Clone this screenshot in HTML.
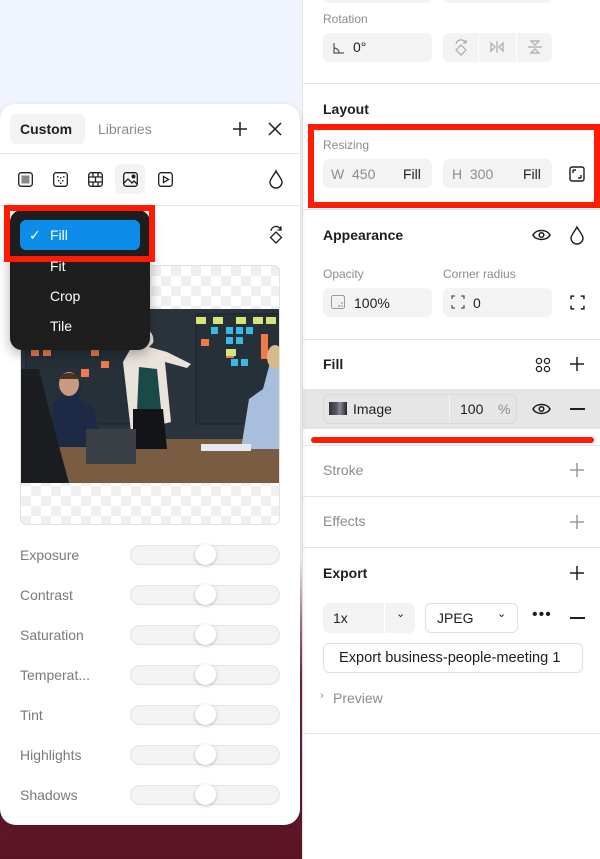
<!DOCTYPE html>
<html><head><meta charset="utf-8"><style>
*{box-sizing:border-box;margin:0;padding:0}
body{width:600px;height:859px;overflow:hidden;position:relative;font-family:"Liberation Sans",sans-serif;background:linear-gradient(180deg,#f0f4fe 0,#f0f4fe 560px,#a87a86 620px,#6e2436 680px,#5a1424 859px)}
.a{position:absolute}
.t{position:absolute;font-size:14px;color:#1e1e1e;white-space:nowrap}
.g{color:#8c8c8c}
.lbl{position:absolute;font-size:12px;color:#8c8c8c}
.h{position:absolute;font-size:14px;font-weight:bold;color:#1e1e1e}
.in{position:absolute;background:#f3f3f3;border-radius:6px}
.div{position:absolute;left:302px;width:298px;height:1px;background:#e6e6e6}
#left{left:0;top:104px;width:300px;height:721px;background:#fff;border-radius:16px;box-shadow:0 2px 8px rgba(0,0,0,.12)}
#right{left:302px;top:0;width:298px;height:859px;background:#fff;border-left:1px solid #e3e3e3}
.trk{position:absolute;left:130px;width:150px;height:20px;border-radius:10px;background:#f3f3f3;border:1px solid #e3e3e3}
.knob{position:absolute;left:195px;width:21px;height:21px;border-radius:50%;background:#fff;box-shadow:0 1px 3px rgba(0,0,0,.25)}
.sl{position:absolute;left:20px;font-size:14px;color:#7a7a7a}
svg{position:absolute;overflow:visible}
</style></head><body>
<div id="right" class="a"></div>
<div class="in" style="left:323px;top:-20px;width:109px;height:23px;background:#f3f3f3"></div>
<div class="in" style="left:443px;top:-20px;width:109px;height:23px"></div>
<div class="lbl" style="left:323px;top:12px">Rotation</div>
<div class="in" style="left:323px;top:33px;width:109px;height:29px"></div>
<svg style="left:332px;top:41px" width="14" height="14" viewBox="0 0 14 14" fill="none" stroke="#555" stroke-width="1.2"><path d="M2 2v10h10M2 7a5 5 0 0 1 5 5"/></svg>
<div class="t" style="left:353px;top:39px">0°</div>
<div class="in" style="left:443px;top:33px;width:109px;height:29px"></div>
<div class="a" style="left:478px;top:33px;width:1px;height:29px;background:#fff"></div>
<div class="a" style="left:516px;top:33px;width:1px;height:29px;background:#fff"></div>
<svg style="left:453px;top:38px" width="16" height="18" viewBox="0 0 16 18" fill="none" stroke="#aaa" stroke-width="1.2"><path d="M8 7l5 5-5 5-5-5z M3 6a5 5 0 0 1 9-2l1-2v3h-3"/></svg>
<svg style="left:489px;top:40px" width="16" height="14" viewBox="0 0 16 14" fill="none" stroke="#aaa" stroke-width="1.2"><path d="M8 1v12M2 3l4 4-4 4z M14 3l-4 4 4 4z"/></svg>
<svg style="left:527px;top:39px" width="16" height="16" viewBox="0 0 16 16" fill="none" stroke="#aaa" stroke-width="1.2"><path d="M1 8h14M4 2h8l-4 4z M4 14h8l-4-4z"/></svg>
<div class="div" style="top:83px"></div>
<div class="h" style="left:323px;top:101px">Layout</div>
<div class="a" style="left:308px;top:124px;width:292px;height:84px;border:6px solid #ff1a00"></div>
<div class="lbl" style="left:323px;top:138px">Resizing</div>
<div class="in" style="left:323px;top:159px;width:109px;height:29px"></div>
<div class="t g" style="left:331px;top:166px">W&nbsp;&nbsp;450</div>
<div class="t" style="left:403px;top:166px">Fill</div>
<div class="in" style="left:443px;top:159px;width:109px;height:29px"></div>
<div class="t g" style="left:452px;top:166px">H&nbsp;&nbsp;300</div>
<div class="t" style="left:523px;top:166px">Fill</div>
<svg style="left:569px;top:166px" width="16" height="16" viewBox="0 0 16 16" fill="none" stroke="#1e1e1e" stroke-width="1.4"><rect x="1" y="1" width="14" height="14" rx="2"/><path d="M4 4h3M4 4v3M12 12h-3M12 12v-3"/></svg>
<div class="div" style="top:209px"></div>
<div class="h" style="left:323px;top:227px">Appearance</div>
<svg style="left:532px;top:228px" width="19" height="14" viewBox="0 0 19 14" fill="none" stroke="#1e1e1e" stroke-width="1.5"><path d="M1 7c3-6 14-6 17 0-3 6-14 6-17 0z"/><circle cx="9.5" cy="7" r="2.3"/></svg>
<svg style="left:570px;top:226px" width="14" height="18" viewBox="0 0 14 18" fill="none" stroke="#1e1e1e" stroke-width="1.4"><path d="M7 1C5 5 1 9 1 12a6 6 0 0 0 12 0c0-3-4-7-6-11z"/></svg>
<div class="lbl" style="left:323px;top:267px">Opacity</div>
<div class="lbl" style="left:443px;top:267px">Corner radius</div>
<div class="in" style="left:323px;top:288px;width:109px;height:29px"></div>
<svg style="left:331px;top:295px" width="14" height="14" viewBox="0 0 14 14" fill="none" stroke="#999" stroke-width="1"><rect x=".5" y=".5" width="13" height="13" rx="2"/><g fill="#bbb" stroke="none"><rect x="10" y="10" width="2" height="2"/><rect x="7" y="10" width="2" height="2"/><rect x="10" y="7" width="2" height="2"/></g></svg>
<div class="t" style="left:354px;top:295px">100%</div>
<div class="in" style="left:443px;top:288px;width:109px;height:29px"></div>
<svg style="left:451px;top:295px" width="14" height="14" viewBox="0 0 14 14" fill="none" stroke="#555" stroke-width="1.3"><path d="M1 4V1h3M10 1h3v3M13 10v3h-3M4 13H1v-3"/></svg>
<div class="t" style="left:473px;top:295px">0</div>
<svg style="left:570px;top:295px" width="15" height="15" viewBox="0 0 14 14" fill="none" stroke="#1e1e1e" stroke-width="1.4"><path d="M1 4V1h3M10 1h3v3M13 10v3h-3M4 13H1v-3"/></svg>
<div class="div" style="top:339px"></div>
<div class="h" style="left:323px;top:356px">Fill</div>
<svg style="left:535px;top:357px" width="16" height="16" viewBox="0 0 16 16" fill="none" stroke="#1e1e1e" stroke-width="1.3"><circle cx="4" cy="4" r="2.6"/><circle cx="12" cy="4" r="2.6"/><circle cx="4" cy="12" r="2.6"/><circle cx="12" cy="12" r="2.6"/></svg>
<svg style="left:569px;top:356px" width="16" height="16" viewBox="0 0 16 16" stroke="#1e1e1e" stroke-width="1.5"><path d="M8 1v14M1 8h14"/></svg>
<div class="a" style="left:303px;top:389px;width:297px;height:40px;background:#e6e6e6"></div>
<div class="a" style="left:323px;top:394px;width:194px;height:30px;border:1px solid #d9d9d9;border-radius:6px;background:#e6e6e6"></div>
<div class="a" style="left:449px;top:395px;width:1px;height:28px;background:#f4f4f4"></div>
<div class="a" style="left:329px;top:402px;width:18px;height:13px;background:linear-gradient(90deg,#333 0,#556 40%,#889 60%,#223)"></div>
<div class="t" style="left:353px;top:401px">Image</div>
<div class="t" style="left:460px;top:401px">100</div>
<div class="t g" style="left:498px;top:401px">%</div>
<svg style="left:532px;top:402px" width="19" height="14" viewBox="0 0 19 14" fill="none" stroke="#1e1e1e" stroke-width="1.5"><path d="M1 7c3-6 14-6 17 0-3 6-14 6-17 0z"/><circle cx="9.5" cy="7" r="2.3"/></svg>
<div class="a" style="left:570px;top:408px;width:15px;height:1.5px;background:#1e1e1e"></div>
<div class="a" style="left:311px;top:437px;width:283px;height:6px;border-radius:3px;background:#ff1a00"></div>
<div class="div" style="top:445px"></div>
<div class="t g" style="left:323px;top:462px">Stroke</div>
<svg style="left:569px;top:462px" width="16" height="16" viewBox="0 0 16 16" stroke="#8c8c8c" stroke-width="1.3"><path d="M8 1v14M1 8h14"/></svg>
<div class="div" style="top:496px"></div>
<div class="t g" style="left:323px;top:513px">Effects</div>
<svg style="left:569px;top:514px" width="16" height="16" viewBox="0 0 16 16" stroke="#8c8c8c" stroke-width="1.3"><path d="M8 1v14M1 8h14"/></svg>
<div class="div" style="top:547px"></div>
<div class="h" style="left:323px;top:565px">Export</div>
<svg style="left:569px;top:565px" width="16" height="16" viewBox="0 0 16 16" stroke="#1e1e1e" stroke-width="1.5"><path d="M8 1v14M1 8h14"/></svg>
<div class="in" style="left:323px;top:603px;width:92px;height:30px"></div>
<div class="a" style="left:384px;top:603px;width:1px;height:30px;background:#fff"></div>
<div class="t" style="left:333px;top:610px">1x</div>
<div class="t" style="left:396px;top:607px;font-size:11px">⌄</div>
<div class="a" style="left:425px;top:603px;width:93px;height:30px;border:1px solid #e0e0e0;border-radius:6px"></div>
<div class="t" style="left:437px;top:610px">JPEG</div>
<div class="t" style="left:497px;top:607px;font-size:11px">⌄</div>
<div class="t" style="left:532px;top:606px;font-size:16px;letter-spacing:1px">•••</div>
<div class="a" style="left:570px;top:617px;width:15px;height:1.5px;background:#1e1e1e"></div>
<div class="a" style="left:323px;top:643px;width:260px;height:30px;border:1px solid #e0e0e0;border-radius:6px"></div>
<div class="t" style="left:339px;top:650px;font-size:14.6px">Export business-people-meeting 1</div>
<div class="t g" style="left:320px;top:690px;font-size:11px">›</div>
<div class="t g" style="left:333px;top:690px">Preview</div>
<div class="div" style="top:733px"></div>

<div id="left" class="a"></div>
<div class="a" style="left:10px;top:114px;width:75px;height:30px;background:#f3f3f3;border-radius:6px"></div>
<div class="t" style="left:20px;top:121px;font-weight:bold">Custom</div>
<div class="t g" style="left:98px;top:121px">Libraries</div>
<svg style="left:232px;top:121px" width="16" height="16" viewBox="0 0 16 16" stroke="#1e1e1e" stroke-width="1.5"><path d="M8 1v14M1 8h14"/></svg>
<svg style="left:268px;top:122px" width="14" height="14" viewBox="0 0 14 14" stroke="#1e1e1e" stroke-width="1.5"><path d="M1 1l12 12M13 1L1 13"/></svg>
<div class="a" style="left:0;top:153px;width:300px;height:1px;background:#e6e6e6"></div>
<svg style="left:18px;top:172px" width="15" height="15" viewBox="0 0 15 15" fill="none" stroke="#1e1e1e" stroke-width="1.3"><rect x=".7" y=".7" width="13.6" height="13.6" rx="2.5"/><rect x="3.5" y="3.5" width="8" height="8" fill="#888" stroke="none"/></svg>
<svg style="left:53px;top:172px" width="15" height="15" viewBox="0 0 15 15" fill="none" stroke="#1e1e1e" stroke-width="1.3"><rect x=".7" y=".7" width="13.6" height="13.6" rx="2.5"/><g fill="#333" stroke="none"><rect x="4" y="4" width="1.5" height="1.5"/><rect x="7" y="5" width="1.5" height="1.5"/><rect x="10" y="4" width="1.5" height="1.5"/><rect x="5" y="8" width="1.5" height="1.5"/><rect x="9" y="8" width="1.5" height="1.5"/><rect x="7" y="10.5" width="1.5" height="1.5"/></g></svg>
<svg style="left:88px;top:172px" width="15" height="15" viewBox="0 0 15 15" fill="none" stroke="#1e1e1e" stroke-width="1.3"><rect x=".7" y=".7" width="13.6" height="13.6" rx="2.5"/><path d="M1 5h13M1 10h13M5 1v4M10 1v4M7.5 5v5M5 10v4M10 10v4"/></svg>
<div class="a" style="left:115px;top:164px;width:30px;height:30px;background:#f3f3f3;border-radius:6px"></div>
<svg style="left:123px;top:172px" width="15" height="15" viewBox="0 0 15 15" fill="none" stroke="#1e1e1e" stroke-width="1.3"><rect x=".7" y=".7" width="13.6" height="13.6" rx="2.5"/><path d="M1 11l4-4 4 4 2-2 3 3"/><circle cx="10.5" cy="4.5" r="1.3" fill="#1e1e1e"/></svg>
<svg style="left:158px;top:172px" width="15" height="15" viewBox="0 0 15 15" fill="none" stroke="#1e1e1e" stroke-width="1.3"><rect x=".7" y=".7" width="13.6" height="13.6" rx="2.5"/><path d="M5.5 4.5v6l5-3z"/></svg>
<svg style="left:269px;top:170px" width="14" height="18" viewBox="0 0 14 18" fill="none" stroke="#1e1e1e" stroke-width="1.4"><path d="M7 1C5 5 1 9 1 12a6 6 0 0 0 12 0c0-3-4-7-6-11z"/></svg>
<div class="a" style="left:0;top:205px;width:300px;height:1px;background:#e6e6e6"></div>
<svg style="left:268px;top:224px" width="16" height="20" viewBox="0 0 16 20" fill="none" stroke="#1e1e1e" stroke-width="1.3"><path d="M8 8l5.5 5.5L8 19l-5.5-5.5z M3 7a5 5 0 0 1 9-2.5l1-2v3.5h-3.5"/></svg>

<div class="a" style="left:20px;top:265px;width:260px;height:260px;border:1px solid #e3e3e3;border-radius:6px;overflow:hidden;background-color:#fff;background-image:linear-gradient(45deg,#efefef 25%,transparent 25%,transparent 75%,#efefef 75%),linear-gradient(45deg,#efefef 25%,transparent 25%,transparent 75%,#efefef 75%);background-size:20px 20px;background-position:0 0,10px 10px">
 <svg style="left:0;top:43px" width="260" height="174" viewBox="0 0 260 174">
  <rect width="260" height="174" fill="#2b333c"/>
  <rect x="5" y="5" width="110" height="110" fill="#263039" stroke="#1c232b"/>
  <rect x="175" y="5" width="85" height="110" fill="#263039" stroke="#1c232b"/>
  <g fill="#f07a4a"><rect x="10" y="40" width="8" height="7"/><rect x="22" y="40" width="8" height="7"/><rect x="70" y="40" width="8" height="7"/><rect x="80" y="52" width="8" height="7"/><rect x="180" y="30" width="8" height="7"/><rect x="205" y="42" width="8" height="7"/><rect x="240" y="25" width="7" height="25"/><rect x="60" y="60" width="8" height="8"/></g>
  <g fill="#3ab8e6"><rect x="190" y="18" width="7" height="7"/><rect x="205" y="18" width="7" height="7"/><rect x="215" y="18" width="7" height="7"/><rect x="225" y="18" width="7" height="7"/><rect x="205" y="28" width="7" height="7"/><rect x="215" y="28" width="7" height="7"/><rect x="30" y="5" width="8" height="6"/><rect x="50" y="5" width="8" height="6"/><rect x="80" y="5" width="8" height="6"/><rect x="210" y="50" width="7" height="7"/><rect x="220" y="50" width="7" height="7"/></g>
  <g fill="#d5e57a"><rect x="175" y="8" width="10" height="7"/><rect x="192" y="8" width="10" height="7"/><rect x="215" y="8" width="10" height="7"/><rect x="232" y="8" width="10" height="7"/><rect x="245" y="8" width="10" height="7"/><rect x="205" y="40" width="10" height="7"/><rect x="5" y="68" width="8" height="7"/></g>
  <rect x="0" y="130" width="260" height="44" fill="#7a5c43"/>
  <path d="M120 20c8-2 14 6 12 14l-4 4 18 5 24 12-4 4-22-6 6 60-40 10-8-70 8-14c-3-6-2-16 10-19z" fill="#e9e3dc"/>
  <path d="M118 58l18 2 4 40-24 2z" fill="#1a4a48"/>
  <path d="M112 100h30l4 40h-34z" fill="#121417"/>
  <path d="M40 70c10-3 22 3 20 14l-3 6 15 8 10 40H30l2-44 8-6z" fill="#1d2a45"/>
  <ellipse cx="48" cy="75" rx="10" ry="12" fill="#c99a80"/>
  <path d="M37 70c4-8 18-8 22 0z" fill="#4a3220"/>
  <path d="M250 50c10 0 10 20 10 20v70h-40l8-50 14-10z" fill="#a7bedc"/>
  <ellipse cx="254" cy="48" rx="8" ry="12" fill="#d9b98a"/>
  <rect x="65" y="120" width="50" height="35" fill="#3a3f46"/>
  <rect x="180" y="135" width="50" height="7" fill="#e4e8ef"/>
  <path d="M0 60h18l10 40 20 74H0z" fill="#1b1d21"/>
 </svg>
</div>

<div class="a" style="left:10px;top:210px;width:140px;height:140px;background:#1e1e1e;border-radius:12px;box-shadow:0 4px 12px rgba(0,0,0,.3)"></div>
<div class="a" style="left:20px;top:220px;width:120px;height:30px;background:#0d8ce9;border-radius:6px"></div>
<div class="t" style="left:29px;top:227px;color:#fff">✓</div>
<div class="t" style="left:50px;top:227px;color:#fff">Fill</div>
<div class="a" style="left:4px;top:205px;width:151px;height:57px;border:6px solid #ff1a00"></div>
<div class="t" style="left:50px;top:258px;color:#fff">Fit</div>
<div class="t" style="left:50px;top:288px;color:#fff">Crop</div>
<div class="t" style="left:50px;top:318px;color:#fff">Tile</div>

<div class="sl" style="top:547px">Exposure</div><div class="trk" style="top:545px"></div><div class="knob" style="top:544px"></div>
<div class="sl" style="top:587px">Contrast</div><div class="trk" style="top:585px"></div><div class="knob" style="top:584px"></div>
<div class="sl" style="top:627px">Saturation</div><div class="trk" style="top:625px"></div><div class="knob" style="top:624px"></div>
<div class="sl" style="top:667px">Temperat...</div><div class="trk" style="top:665px"></div><div class="knob" style="top:664px"></div>
<div class="sl" style="top:707px">Tint</div><div class="trk" style="top:705px"></div><div class="knob" style="top:704px"></div>
<div class="sl" style="top:747px">Highlights</div><div class="trk" style="top:745px"></div><div class="knob" style="top:744px"></div>
<div class="sl" style="top:787px">Shadows</div><div class="trk" style="top:785px"></div><div class="knob" style="top:784px"></div>
</body></html>
